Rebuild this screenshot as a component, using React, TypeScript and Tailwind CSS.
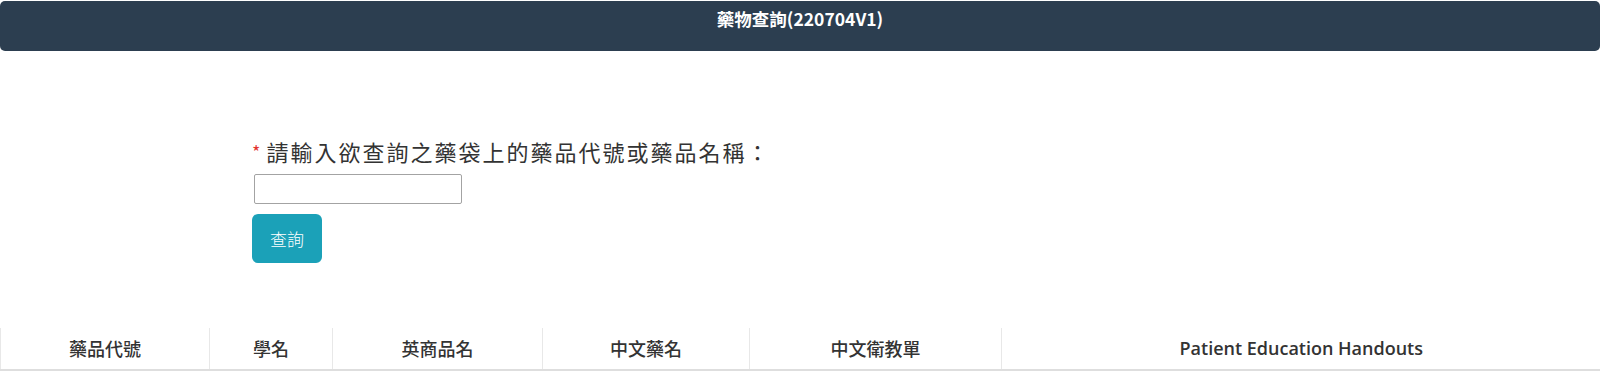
const columns = [
  { label: '藥品代號', width: 209 },
  { label: '學名', width: 123 },
  { label: '英商品名', width: 210 },
  { label: '中文藥名', width: 207 },
  { label: '中文衛教單', width: 252 },
  { label: 'Patient Education Handouts', width: 599 },
]

const cjk = "font-['Noto_Sans_CJK_TC','Noto_Sans',sans-serif]"

export default function App() {
  return (
    <div className={`min-h-[377px] bg-white ${cjk}`}>
      {/* 標題列 */}
      <div className="mt-px h-[50px] rounded-[5px] bg-[#2c3e50] pt-[6px] text-center text-[17.5px] font-bold leading-[24px] text-white">
        藥物查詢(220704V1)
      </div>

      {/* 查詢表單 */}
      <div className="pl-[252px] pt-[84px]">
        <label className="flex items-center text-[22px] leading-[33px] tracking-[2px] text-[#333]">
          <span className="mr-[4px] text-[18px] text-[#e3342f]">*</span>
          請輸入欲查詢之藥袋上的藥品代號或藥品名稱：
        </label>
        <input
          type="text"
          className="mt-[6px] ml-[2px] block h-[30px] w-[208px] rounded-[2px] border border-[#a3a3a3] px-2 text-[15px] outline-none"
        />
        <button className="mt-[10px] block h-[49px] w-[70px] rounded-[6px] bg-[#1ba1b8] text-[17px] font-light text-white">
          查詢
        </button>
      </div>

      {/* 結果表格 */}
      <table className="mt-[65px] w-[1600px] table-fixed border-collapse">
        <colgroup>
          {columns.map((c) => (
            <col key={c.label} style={{ width: c.width }} />
          ))}
        </colgroup>
        <thead>
          <tr className="border-b-2 border-[#dedede]">
            {columns.map((c, i) => (
              <th
                key={c.label}
                className={`h-[42px] border-l border-[#e8e8e8] text-center text-[18px] text-[#333] ${
                  i === columns.length - 1
                    ? "font-['Open_Sans',sans-serif] font-semibold"
                    : 'font-medium'
                }`}
              >
                {c.label}
              </th>
            ))}
          </tr>
        </thead>
      </table>
    </div>
  )
}
